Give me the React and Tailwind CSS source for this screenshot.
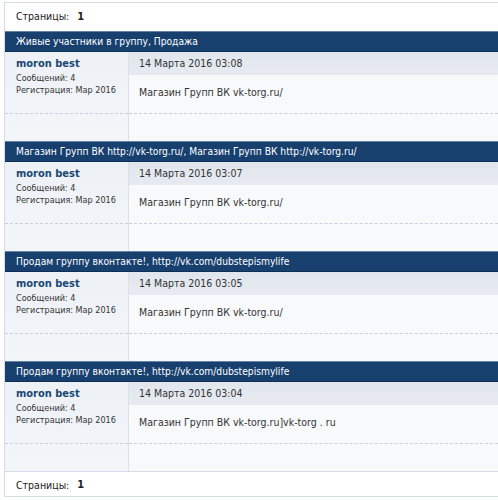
const posts = [
  {
    title: 'Живые участники в группу, Продажа',
    date: '14 Марта 2016 03:08',
    text: 'Магазин Групп ВК vk-torg.ru/',
  },
  {
    title: 'Магазин Групп ВК http://vk-torg.ru/, Магазин Групп ВК http://vk-torg.ru/',
    date: '14 Марта 2016 03:07',
    text: 'Магазин Групп ВК vk-torg.ru/',
  },
  {
    title: 'Продам группу вконтакте!, http://vk.com/dubstepismylife',
    date: '14 Марта 2016 03:05',
    text: 'Магазин Групп ВК vk-torg.ru/',
  },
  {
    title: 'Продам группу вконтакте!, http://vk.com/dubstepismylife',
    date: '14 Марта 2016 03:04',
    text: 'Магазин Групп ВК vk-torg.ru]vk-torg . ru',
  },
]

function Pager({ className }) {
  return (
    <div className={`flex items-center px-[11px] text-[10.5px] text-[#222] bg-white ${className}`}>
      <span>Страницы:</span>
      <span className="ml-[8px] font-bold text-[11px]">1</span>
    </div>
  )
}

function Post({ post }) {
  return (
    <div>
      {/* Тема */}
      <div className="h-[21px] flex items-center px-[11px] bg-[#17406f] border-t border-t-[#6683a8] border-b border-b-[#0f2e54] text-white text-[10.2px] whitespace-nowrap">
        {post.title}
      </div>
      <div className="flex h-[89px]">
        {/* Автор */}
        <div className="w-[124px] shrink-0 flex flex-col bg-gradient-to-b from-[#edf1f6] to-[#f3f6f9] border-r border-[#dbe1e8]">
          <div className="h-[61px] px-[11px] pt-[5px] text-[#333] whitespace-nowrap">
            <div className="text-[11px] font-bold text-[#1a4873] leading-[14px]">moron best</div>
            <div className="text-[9px] leading-[12px] mt-[1px]">Сообщений: 4</div>
            <div className="text-[9px] leading-[12px]">Регистрация: Мар 2016</div>
          </div>
          <div className="flex-1 border-t border-dashed border-[#c9cfd8]"></div>
        </div>
        {/* Сообщение */}
        <div className="flex-1 flex flex-col bg-[#f8f9fb]">
          <div className="h-[23px] flex items-center px-[10px] bg-gradient-to-b from-[#e1e6ed] to-[#e7ebf1] text-[10.5px] text-[#333]">
            {post.date}
          </div>
          <div className="h-[38px] px-[10px] pt-[10px] text-[10.5px] text-[#333] leading-[14px]">
            {post.text}
          </div>
          <div className="flex-1 border-t border-dashed border-[#c9cfd8]"></div>
        </div>
      </div>
    </div>
  )
}

export default function App() {
  return (
    <div className="w-[498px] h-[500px] bg-white pl-[4px] pt-[2px] overflow-hidden" style={{ fontFamily: '"DejaVu Sans Condensed", "Liberation Sans", Arial, sans-serif' }}>
      <div className="border-l border-t border-[#d6dce4]">
        <Pager className="h-[28px]" />
        {posts.map((p, i) => (
          <Post key={i} post={p} />
        ))}
        <Pager className="h-[26px] pt-[3px] border-t border-b border-[#d6dce4]" />
      </div>
    </div>
  )
}
